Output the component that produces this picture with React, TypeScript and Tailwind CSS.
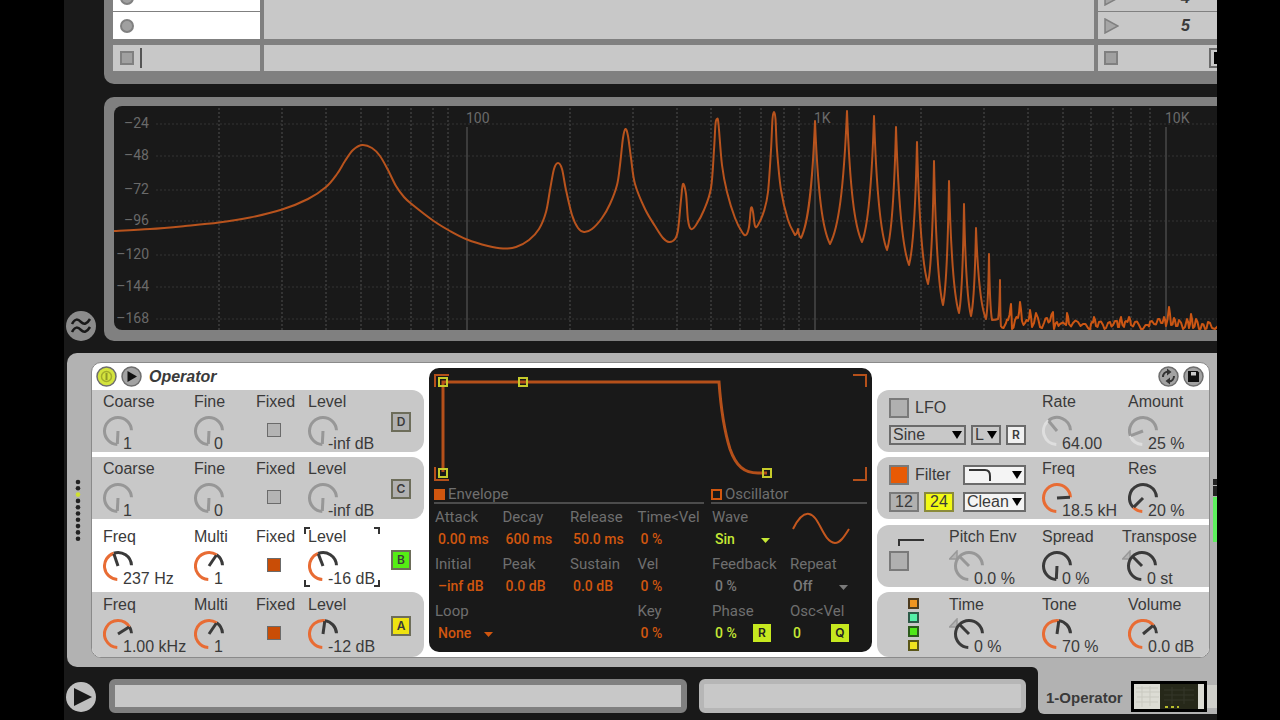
import React from 'react';
import clsx from 'clsx';

type Point = [number, number];

const DB_LINES = [
  { label: '–24', y: 124 },
  { label: '–48', y: 156 },
  { label: '–72', y: 190 },
  { label: '–96', y: 221 },
  { label: '–120', y: 255 },
  { label: '–144', y: 287 },
  { label: '–168', y: 319 },
];

const MINOR_LINES = [
  219, 282, 326, 361, 388, 411, 433, 448, 570, 633, 677, 711, 740, 761, 784, 799, 921, 984, 1028,
  1063, 1091, 1113, 1131, 1150,
];

const DECADES = [
  { label: '100', x: 467 },
  { label: '1K', x: 815 },
  { label: '10K', x: 1166 },
];

// low end of the spectrum, drawn as one smooth curve
const LOW_CURVE: Point[] = [
  [112, 231], [150, 229], [185, 226], [219, 222.5], [250, 217.5], [282, 209.5], [308, 199], [326, 187],
  [337, 174], [345, 161], [353, 150], [362, 145], [372, 148], [380, 156], [388, 170], [396, 186],
  [404, 197], [411, 203.5], [433, 220.5], [450, 231], [467, 239.5], [488, 246], [503, 248.5],
  [516, 247], [529, 240], [539, 229], [546, 212], [550, 190], [554, 169], [558, 163], [562, 169],
  [566, 190], [572, 215], [578, 228], [584, 232], [592, 229], [602, 218], [610, 204], [617, 185],
  [620, 165], [623, 138], [625.5, 129], [628, 136], [631, 158], [635, 184], [645, 209], [655, 226],
  [663, 238], [669, 242], [675, 239], [678, 230], [681, 200], [683, 184], [686, 194], [688, 220],
  [691, 229], [696, 225], [704, 210], [711, 188], [714, 150], [715.5, 124], [717, 119], [718.5, 124],
  [722, 165], [727, 192], [735, 218], [742, 232], [746, 235], [749, 227], [751, 208], [753, 212],
  [755, 226], [758, 225], [764, 211], [768, 192], [771, 150], [772.5, 119], [774, 112], [775.5, 119],
  [777, 150], [781, 190], [788, 220], [795, 235],
];

// valley / peak pairs of the upper partials
const PARTIALS: Point[] = [
  [798, 229], [801, 238], [815, 121], [830, 244], [847, 111], [862, 242], [874, 116], [887, 250],
  [896, 127], [909, 265], [917, 142], [928, 284], [934, 161], [943, 305], [949, 181], [959, 313],
  [964, 204], [971, 316], [976, 228], [986, 319], [989, 254], [992, 320], [998, 319], [1000, 280],
  [1001, 327],
];

const NOISE: Point[] = [
  [1001, 327], [1006, 323], [1008, 320], [1011, 304], [1012, 329], [1015, 320], [1018, 318],
  [1020, 302], [1022, 321], [1025, 323], [1028, 321], [1030, 310], [1032, 327], [1036, 313],
  [1040, 327], [1044, 323], [1047, 318], [1050, 321], [1053, 312], [1054, 329], [1057, 322],
  [1060, 324], [1066, 325], [1067, 313], [1069, 324], [1073, 323], [1078, 322], [1083, 324],
  [1088, 328], [1090, 330], [1092, 322], [1094, 317], [1096, 326], [1099, 322], [1103, 325],
  [1106, 328], [1110, 322], [1113, 325], [1117, 321], [1119, 327], [1121, 317], [1124, 327],
  [1126, 321], [1129, 317], [1131, 325], [1135, 322], [1139, 325], [1143, 329], [1148, 325],
  [1150, 322], [1154, 324], [1158, 319], [1161, 323], [1164, 317], [1166, 326], [1169, 307],
  [1171, 325], [1174, 318], [1176, 326], [1179, 320], [1183, 329], [1187, 319], [1189, 328],
  [1191, 314], [1193, 328], [1196, 319], [1199, 329], [1202, 324], [1205, 329], [1208, 322],
  [1212, 328], [1218, 326],
];

const smooth = (pts: Point[]) => {
  let d = `M${pts[0][0]} ${pts[0][1]}`;
  for (let i = 0; i < pts.length - 1; i++) {
    const p0 = pts[i - 1] || pts[i];
    const p1 = pts[i];
    const p2 = pts[i + 1];
    const p3 = pts[i + 2] || p2;
    d += ` C${p1[0] + (p2[0] - p0[0]) / 6} ${p1[1] + (p2[1] - p0[1]) / 6} ${p2[0] - (p3[0] - p1[0]) / 6} ${p2[1] - (p3[1] - p1[1]) / 6} ${p2[0]} ${p2[1]}`;
  }
  return d;
};

// flanks are flat near a valley and steep near a peak
const flanks = (start: Point, pts: Point[]) => {
  let [x, y] = start;
  let d = '';
  for (const [nx, ny] of pts) {
    const dx = nx - x;
    const dy = ny - y;
    d +=
      ny < y
        ? ` C${x + dx * 0.5} ${y + dy * 0.12} ${nx - dx * 0.2} ${y + dy * 0.4} ${nx} ${ny}`
        : ` C${x + dx * 0.2} ${ny - dy * 0.4} ${nx - dx * 0.5} ${ny - dy * 0.12} ${nx} ${ny}`;
    x = nx;
    y = ny;
  }
  return d;
};

const SPECTRUM = smooth(LOW_CURVE) + flanks(LOW_CURVE[LOW_CURVE.length - 1], PARTIALS);

// a small wiggle between the points makes the noise floor denser
const NOISE_FLOOR = NOISE.map(([x, y], i) => {
  if (i === 0) return `M${x} ${y}`;
  const [px, py] = NOISE[i - 1];
  const mid = Math.min(329, (py + y) / 2 + (i % 2 ? 3 : -2));
  return ` L${(px + x) / 2} ${mid} L${x} ${y}`;
}).join('');

const Spectrum: React.FC = () => (
  <svg viewBox="114 106 1103 224" className="block h-auto w-full rounded-l-[8px] bg-[#191919]">
    <g stroke="#343434" strokeWidth="2" strokeDasharray="2 2">
      {DB_LINES.map((l) => (
        <line key={l.y} x1="156" x2="1217" y1={l.y} y2={l.y} strokeWidth="1" />
      ))}
      {MINOR_LINES.map((x) => (
        <line key={x} x1={x} x2={x} y1="108" y2="330" />
      ))}
    </g>
    <g fill="#6a6a6a" fontFamily="Roboto, sans-serif" fontSize="14">
      {DECADES.map((d) => (
        <g key={d.label}>
          <line x1={d.x} x2={d.x} y1="127" y2="330" stroke="#3c3c3c" strokeWidth="2" />
          <text x={d.x - 1} y="123">{d.label}</text>
        </g>
      ))}
      {DB_LINES.map((l) => (
        <text key={l.y} x="149" y={l.y + 4} textAnchor="end">{l.label}</text>
      ))}
    </g>
    <g fill="none" strokeWidth="2" strokeLinejoin="round">
      <path d={SPECTRUM} stroke="#b8531d" />
      <path d={NOISE_FLOOR} stroke="#cb5614" />
    </g>
  </svg>
);

const polar = (cx: number, cy: number, r: number, value: number) => {
  const a = ((93 + 264 * value) * Math.PI) / 180;
  return [cx + r * Math.cos(a), cy + r * Math.sin(a)];
};

const arc = (cx: number, cy: number, r: number, from: number, to: number) => {
  const [x1, y1] = polar(cx, cy, r, from);
  const [x2, y2] = polar(cx, cy, r, to);
  return `M${x1} ${y1} A${r} ${r} 0 ${(to - from) * 264 > 180 ? 1 : 0} 1 ${x2} ${y2}`;
};

interface KnobProps {
  label: string;
  text: string;
  value: number;
  off?: boolean;
  bipolar?: boolean;
  selected?: boolean;
}

const Knob: React.FC<KnobProps> = ({ label, text, value, off, bipolar, selected }) => {
  const cx = bipolar ? 20 : 15;
  const base = off ? '#979797' : '#3a3a3a';
  const fill = off ? '#dedede' : '#e86c34';
  const filled = bipolar ? 0 : value;
  const [nx, ny] = polar(cx, 16, 13, value);
  return (
    <label className="relative block whitespace-nowrap">
      <span className="mb-[3px] block leading-5">{label}</span>
      <span className="flex h-[37px]">
        <svg className={clsx('h-8 shrink-0', bipolar ? 'w-[35px]' : 'w-[30px]')} fill="none">
          {bipolar && <path d="M0.5 9L8 1V9Z" stroke="#999" strokeWidth="1.5" fill="#b4b4b4" />}
          {filled < 1 && <path d={arc(cx, 16, 13.5, filled, 1)} stroke={base} strokeWidth="3" />}
          {filled > 0 && <path d={arc(cx, 16, 13.5, 0, filled)} stroke={fill} strokeWidth="3" />}
          <path d={`M${cx} 16 L${nx} ${ny}`} stroke={base} strokeWidth="3" />
        </svg>
        <span className="-ml-[10px] self-end leading-4">{text}</span>
      </span>
      <input type="range" min="0" max="1" step="0.01" defaultValue={value} className="sr-only" />
      {selected && (
        <svg className="absolute -left-[4px] top-0 h-[60px] w-[76px]" fill="none" stroke="#333" strokeWidth="2">
          <path d="M1 7V1H6M70 1H75V7M1 53V59H6M70 59H75V53" />
        </svg>
      )}
    </label>
  );
};

interface OscRowProps {
  name: string;
  knobs: KnobProps[];
  fixed: boolean;
  className: string;
  color: string;
}

const OscRow: React.FC<OscRowProps> = ({ name, knobs, fixed, className, color }) => (
  <div className={clsx('flex pl-[11px]', className)}>
    <div className="w-[91px]"><Knob {...knobs[0]} /></div>
    <div className="w-[62px]"><Knob {...knobs[1]} /></div>
    <label className="block w-[52px]">
      <span className="block leading-5">Fixed</span>
      <input
        type="checkbox"
        defaultChecked={fixed}
        className="mt-[11px] ml-[11px] block size-[14px] appearance-none border border-[#6b6b6b] bg-[#b4b4b4] checked:bg-[#c94d06]"
      />
    </label>
    <div className="w-[83px]"><Knob {...knobs[2]} /></div>
    <button
      className={clsx(
        'size-5 self-center border-2 border-[#6d6d5a] text-center font-[Inter,sans-serif] text-[12px] leading-4 font-semibold',
        color,
      )}
    >
      {name}
    </button>
  </div>
);

const Triangle: React.FC<{ className: string }> = ({ className }) => (
  <svg
    viewBox="0 0 10 8"
    preserveAspectRatio="none"
    className={clsx('pointer-events-none absolute', className)}
    fill="currentColor"
  >
    <path d="M0 0H10L5 8Z" />
  </svg>
);

interface DropProps {
  label: string;
  options: string[];
  className?: string;
  children?: React.ReactNode;
}

const Drop: React.FC<DropProps> = ({ label, options, className, children }) => (
  <span className={clsx('relative block h-5', className)}>
    <select
      aria-label={label}
      className="block h-5 w-full appearance-none border-2 border-[#6b6b6b] bg-transparent pl-[2px] leading-4 outline-none"
    >
      {options.map((o) => (
        <option key={o}>{o}</option>
      ))}
    </select>
    {children}
    <Triangle className="top-[6px] right-[4px] h-[8px] w-[10px] text-black" />
  </span>
);

const ToggleBox: React.FC<{ label: string; on?: boolean }> = ({ label, on }) => (
  <label className="flex h-5 items-center gap-[6px]">
    <input
      type="checkbox"
      defaultChecked={on}
      className="size-5 appearance-none border-2 border-[#7a7a7a] bg-[#b0b0b0] checked:bg-[#e85a05]"
    />
    {label}
  </label>
);

const EnvelopeGraph: React.FC = () => (
  <svg viewBox="434 373 433 108" className="block h-[108px] w-full" fill="none">
    <path
      d="M435 387V375H449M853 375H866V387M435 467V480H449M853 480H866V467"
      stroke="#b5501a"
      strokeWidth="2"
    />
    <path d="M443 472V382H719C721 410 724 430 730 449C736 466 744 473 758 473H767" stroke="#b5501a" strokeWidth="3" />
    {[[443, 382], [523, 382], [443, 473], [767, 473]].map(([x, y]) => (
      <rect key={`${x}-${y}`} x={x - 4} y={y - 4} width="8" height="8" stroke="#c6cb2b" strokeWidth="2" />
    ))}
  </svg>
);

interface CellProps {
  label: string;
  value?: string;
  select?: boolean;
  tone?: string;
  button?: string;
}

const Cell: React.FC<CellProps> = ({ label, value, select, tone = 'text-[#d0560f]', button }) => (
  <div className="h-11 pl-px whitespace-nowrap">
    <div className="text-[15px] leading-[22px]">{label}</div>
    {value && (
      <div className={clsx('flex h-[22px] items-center pl-[3px] text-[14px] leading-[22px] font-medium', tone)}>
        {select ? (
          <span className="relative block w-[56px]">
            <select aria-label={label} className="block h-[22px] w-full appearance-none bg-transparent leading-[22px] outline-none">
              <option>{value}</option>
            </select>
            <Triangle className="top-[10px] right-[1px] h-[5px] w-[9px]" />
          </span>
        ) : (
          <span className="w-[38px]">{value}</span>
        )}
        {button && (
          <button className="size-[18px] bg-[#c6e81f] text-center font-[Inter,sans-serif] text-[12px] leading-[18px] font-semibold text-[#222]">
            {button}
          </button>
        )}
      </div>
    )}
  </div>
);

const GREEN = 'text-[#c6e835]';

const Display: React.FC = () => (
  <div className="rounded-[10px] bg-[#191919] px-[5px] pt-[5px] pb-2 font-[Roboto,sans-serif] text-[#6f6f6f]">
    <EnvelopeGraph />
    <div className="mt-[5px] flex gap-[7px]">
      <div className="min-w-0 flex-1">
        <label className="flex h-[18px] items-center gap-[3px] border-b-2 border-[#4c4c4c] text-[15px] leading-4">
          <input type="radio" name="view" defaultChecked className="size-[11px] appearance-none border-2 border-[#d0560f] checked:bg-[#d0560f]" />
          Envelope
        </label>
        <div className="mt-[2px] grid grid-cols-4 gap-y-[3px]">
          <Cell label="Attack" value="0.00 ms" />
          <Cell label="Decay" value="600 ms" />
          <Cell label="Release" value="50.0 ms" />
          <Cell label="Time<Vel" value="0 %" />
          <Cell label="Initial" value="–inf dB" />
          <Cell label="Peak" value="0.0 dB" />
          <Cell label="Sustain" value="0.0 dB" />
          <Cell label="Vel" value="0 %" />
          <div className="col-span-3">
            <Cell label="Loop" value="None" select />
          </div>
          <Cell label="Key" value="0 %" />
        </div>
      </div>
      <div className="w-[156px]">
        <label className="flex h-[18px] items-center gap-[3px] border-b-2 border-[#4c4c4c] text-[15px] leading-4">
          <input type="radio" name="view" className="size-[11px] appearance-none border-2 border-[#d0560f] checked:bg-[#d0560f]" />
          Oscillator
        </label>
        <div className="mt-[2px] grid grid-cols-2 gap-y-[3px]">
          <Cell label="Wave" value="Sin" select tone={GREEN} />
          <svg viewBox="0 0 58 34" className="mt-[6px] ml-[3px] h-[34px] w-[58px]" fill="none" stroke="#c4571e" strokeWidth="2">
            <path d="M1 17C7 5 12 1 17 2C28 4 30 29 43 31C48 31 52 25 57 17" />
          </svg>
          <Cell label="Feedback" value="0 %" tone="text-[#7a7a7a]" />
          <Cell label="Repeat" value="Off" select tone="text-[#7a7a7a]" />
          <Cell label="Phase" value="0 %" tone={GREEN} button="R" />
          <Cell label="Osc<Vel" value="0" tone={GREEN} button="Q" />
        </div>
      </div>
    </div>
  </div>
);

const RoundIcon: React.FC<{ label: string; fill?: string; children: React.ReactNode }> = ({ label, fill = '#a3a3a3', children }) => (
  <button aria-label={label} className="block size-[21px] shrink-0">
    <svg viewBox="0 0 21 21" className="block size-[21px]">
      <circle cx="10.5" cy="10.5" r="9.5" fill={fill} stroke="#6e6e6e" strokeWidth="1.5" />
      {children}
    </svg>
  </button>
);

const OFF_KNOBS: KnobProps[] = [
  { label: 'Coarse', text: '1', value: 0, off: true },
  { label: 'Fine', text: '0', value: 0, off: true },
  { label: 'Level', text: '-inf dB', value: 0, off: true },
];

const SECTION = 'flex rounded-l-[12px] bg-[#c8c8c8] pl-3';

const Device: React.FC = () => (
  <div className="ml-[3px] flex rounded-l-[10px] bg-[#b2b2b2] py-[9px]">
    <div className="flex w-6 shrink-0 pl-2">
      <svg viewBox="0 0 6 62" className="mt-[117px] h-[62px] w-[6px]">
        {Array.from({ length: 10 }, (_, i) => (
          <circle key={i} cx="3" cy={3 + i * 6.3} r="2.3" fill={i === 2 ? '#cfe02f' : '#222'} />
        ))}
      </svg>
    </div>
    <div className="flex min-w-0 flex-1 overflow-hidden rounded-[10px] border border-[#8a8a8a] bg-white">
      <div className="flex w-[332px] shrink-0 flex-col">
        <div className="flex h-[27px] items-center gap-1 pl-1">
          <RoundIcon label="Device on" fill="#d3e33d">
            <circle cx="10.5" cy="10.5" r="5" fill="none" stroke="#a3ad2c" strokeWidth="1.5" />
            <path d="M10.5 7V14" stroke="#8f9926" strokeWidth="2" />
          </RoundIcon>
          <RoundIcon label="Unfold">
            <path d="M6.5 5L16 10.5L6.5 16Z" fill="#111" />
          </RoundIcon>
          <h1 className="ml-[3px] text-[16px] leading-5 font-bold italic">Operator</h1>
        </div>
        <OscRow name="D" className="mb-[5px] h-[62px] rounded-r-[12px] bg-[#c8c8c8] pt-[2px]" color="bg-[#b0b0b0]" fixed={false} knobs={OFF_KNOBS} />
        <OscRow name="C" className="h-[62px] rounded-r-[12px] bg-[#c8c8c8] pt-[2px]" color="bg-[#b0b0b0]" fixed={false} knobs={OFF_KNOBS} />
        <OscRow
          name="B"
          className="h-[73px] pt-2"
          color="bg-[#55ee14]"
          fixed
          knobs={[
            { label: 'Freq', text: '237 Hz', value: 0.6 },
            { label: 'Multi', text: '1', value: 0.8 },
            { label: 'Level', text: '-16 dB', value: 0.59, selected: true },
          ]}
        />
        <OscRow
          name="A"
          className="flex-1 rounded-r-[12px] bg-[#c8c8c8] pt-[3px]"
          color="bg-[#efe310]"
          fixed
          knobs={[
            { label: 'Freq', text: '1.00 kHz', value: 0.89 },
            { label: 'Multi', text: '1', value: 0.8 },
            { label: 'Level', text: '-12 dB', value: 0.7 },
          ]}
        />
      </div>
      <div className="min-w-0 flex-1 p-[5px]">
        <Display />
      </div>
      <div className="flex w-[332px] shrink-0 flex-col">
        <div className="flex h-[27px] items-center justify-end gap-1 pr-[5px]">
          <RoundIcon label="Hot-swap">
            <path d="M5 11A5.5 5.5 0 0 1 10 5.5M16 10A5.5 5.5 0 0 1 11 15.5" fill="none" stroke="#333" strokeWidth="2" />
            <path d="M9 2.5L13.5 6L9 9.5ZM12 11.5L7.5 15L12 18.5Z" fill="#333" />
          </RoundIcon>
          <RoundIcon label="Save preset">
            <path d="M5 5H14.5L16 6.5V16H5Z" fill="#111" />
            <path d="M8 6H13V9.5H8Z" fill="#ccc" />
          </RoundIcon>
        </div>
        <div className={clsx(SECTION, 'mb-[5px] h-[62px] pt-[2px]')}>
          <div className="flex w-[153px] flex-col gap-[7px] pt-[6px]">
            <ToggleBox label="LFO" />
            <div className="flex gap-[5px]">
              <Drop label="LFO wave" options={['Sine']} className="w-[77px]" />
              <Drop label="LFO range" options={['L']} className="w-[30px]" />
              <button className="size-5 border-2 border-[#6b6b6b] bg-[#f0f0f0] text-center font-[Inter,sans-serif] text-[12px] leading-4 font-semibold">R</button>
            </div>
          </div>
          <div className="w-[86px]"><Knob label="Rate" text="64.00" value={0.52} off /></div>
          <Knob label="Amount" text="25 %" value={0.25} off />
        </div>
        <div className={clsx(SECTION, 'mb-[6px] h-[62px] pt-[2px]')}>
          <div className="w-[153px] pt-[6px]">
            <div className="grid grid-cols-[74px_63px] gap-y-[7px]">
              <ToggleBox label="Filter" on />
              <Drop label="Filter type" options={['']} className="bg-[#f4f4f4]">
                <svg viewBox="0 0 24 14" className="pointer-events-none absolute top-[4px] left-[5px] h-[14px] w-6" fill="none" stroke="#333" strokeWidth="2">
                  <path d="M1 1H17Q22 1 22 7V12" />
                </svg>
              </Drop>
              <div className="flex gap-[5px]">
                <button className="h-5 w-[30px] border-2 border-[#7a7a7a] bg-[#b0b0b0] text-center leading-4">12</button>
                <button className="h-5 w-[30px] border-2 border-[#8a8a3a] bg-[#f2fa14] text-center leading-4">24</button>
              </div>
              <Drop label="Filter circuit" options={['Clean']} className="bg-[#f4f4f4]" />
            </div>
          </div>
          <div className="w-[86px]"><Knob label="Freq" text="18.5 kH" value={1} /></div>
          <Knob label="Res" text="20 %" value={0.16} />
        </div>
        <div className={clsx(SECTION, 'mb-[5px] h-[62px] pt-[2px]')}>
          <label className="w-[60px] pt-[10px]">
            <svg viewBox="0 0 26 10" className="ml-[9px] h-[10px] w-[26px]" fill="none" stroke="#333" strokeWidth="2">
              <path d="M1 9V3H26" />
            </svg>
            <input type="checkbox" aria-label="Pitch envelope" className="mt-[4px] block size-5 appearance-none border-2 border-[#7a7a7a] bg-[#b0b0b0]" />
          </label>
          <div className="w-[93px]"><Knob label="Pitch Env" text="0.0 %" value={0.5} off bipolar /></div>
          <div className="w-[80px]"><Knob label="Spread" text="0 %" value={0} /></div>
          <Knob label="Transpose" text="0 st" value={0.5} bipolar />
        </div>
        <div className={clsx(SECTION, 'flex-1 pt-[3px]')}>
          <div className="flex w-[60px] flex-col gap-[3px] pt-[3px] pl-[19px]">
            <span className="size-[11px] border-2 border-[#4c3a1e] bg-[#ee9420]" />
            <span className="size-[11px] border-2 border-[#2d5a48] bg-[#55f0a8]" />
            <span className="size-[11px] border-2 border-[#2c5a1c] bg-[#50e818]" />
            <span className="size-[11px] border-2 border-[#5a5618] bg-[#f0e420]" />
          </div>
          <div className="w-[93px]"><Knob label="Time" text="0 %" value={0.5} bipolar /></div>
          <div className="w-[86px]"><Knob label="Tone" text="70 %" value={0.7} /></div>
          <Knob label="Volume" text="0.0 dB" value={0.86} />
        </div>
      </div>
    </div>
    <div className="w-[7px] shrink-0 pt-[117px] pl-[3px]">
      <div className="mb-px h-[6px] bg-[#222]" />
      <div className="mb-px h-[10px] bg-[#222]" />
      <div className="h-[45px] bg-[#5cf05c]" />
    </div>
  </div>
);

const SlotRow: React.FC<{ scene: string; first?: boolean }> = ({ scene, first }) => (
  <div className={clsx('flex gap-1 overflow-hidden', first ? 'h-[11px] items-end' : 'h-7')}>
    <div className="flex h-7 w-[147px] shrink-0 items-center border-t border-[#808080] bg-white pl-[7px]">
      <span className="size-[14px] rounded-full border-2 border-[#808080] bg-[#a0a0a0]" />
    </div>
    <div className="h-7 flex-1 bg-[#c8c8c8]" />
    <div className="flex h-7 w-[119px] shrink-0 items-center overflow-hidden border-t border-[#808080] bg-[#c8c8c8] pl-[6px]">
      <svg viewBox="0 0 15 16" className="h-4 w-[15px] shrink-0">
        <path d="M1 1L14 8L1 15Z" fill="#a6a6a6" stroke="#808080" strokeWidth="1.5" />
      </svg>
      <span className="flex-1 pl-[62px] leading-5 font-bold italic">{scene}</span>
    </div>
  </div>
);

const Session: React.FC = () => (
  <div className="ml-10 rounded-bl-[10px] bg-[#808080] pb-[13px] pl-[9px]">
    <SlotRow scene="4" first />
    <SlotRow scene="5" />
    <div className="mt-[6px] flex h-[26px] gap-1">
      <div className="flex w-[147px] items-center gap-[6px] bg-[#c8c8c8] pl-[7px]">
        <button aria-label="Stop clip" className="size-[14px] border-2 border-[#808080] bg-[#a0a0a0]" />
        <span className="h-5 w-[2px] bg-[#555]" />
      </div>
      <div className="flex-1 bg-[#c8c8c8]" />
      <div className="flex w-[119px] items-center justify-between bg-[#c8c8c8] pl-[6px]">
        <button aria-label="Stop all clips" className="size-[14px] border-2 border-[#808080] bg-[#a0a0a0]" />
        <button aria-label="Back to arrangement" className="h-5 w-2 border-2 border-r-0 border-[#6b6b6b] py-[2px] pl-[3px]">
          <span className="block h-3 w-[3px] bg-black" />
        </button>
      </div>
    </div>
  </div>
);

const StatusBar: React.FC = () => (
  <div className="flex h-[53px] bg-[#b2b2b2]">
    <div className="flex flex-1 items-start gap-3 rounded-tr-[6px] bg-[#191919] pt-3 pr-3 pl-[2px]">
      <button aria-label="Preview" className="mt-[3px] block size-[30px]">
        <svg viewBox="0 0 30 30">
          <circle cx="15" cy="15" r="15" fill="#c0c0c0" />
          <path d="M8 6L26 15L8 24Z" fill="#191919" />
        </svg>
      </button>
      <div className="ml-px h-[34px] flex-1 rounded-[6px] border-[6px] border-[#808080] bg-[#c8c8c8]" />
      <div className="h-[34px] w-[327px] rounded-[6px] border-[5px] border-[#b6b6b6] bg-[#c8c8c8]" />
    </div>
    <div className="w-[179px] shrink-0 bg-[#191919] pb-[6px]">
      <div className="flex h-full items-center rounded-bl-[6px] bg-[#b2b2b2] pl-2">
        <span className="w-[85px] pt-[14px] text-[15px] leading-5 font-bold">1-Operator</span>
        <span className="mt-[11px] flex h-[31px] w-[76px] border-[3px] border-black bg-[#dcdcd4]">
          <svg viewBox="0 0 70 25" className="h-[25px] w-[70px]">
            <path d="M2 4H24M2 8H26M3 13H25M2 18H24M8 2V23M16 2V22" stroke="#c9c9c0" strokeWidth="1" />
            <rect x="26" width="38" height="25" fill="#262819" />
            <path d="M30 6H60M30 11H60M30 16H60M38 3V20M50 3V20" stroke="#34372a" strokeWidth="1" />
            <path d="M31 23H34M37 23H40M43 23H45" stroke="#b9be2c" strokeWidth="2" />
          </svg>
        </span>
        <span className="mt-[11px] h-[23px] flex-1 bg-[#cfcfca]" />
      </div>
    </div>
  </div>
);

const App: React.FC = () => (
  <div className="min-h-screen overflow-hidden bg-black pr-[63px] pl-16">
    <div className="relative min-h-screen bg-[#191919] font-['Liberation_Sans',Arial,sans-serif] text-[16px] text-[#3a3a3a]">
      <Session />
      <div className="mt-[13px] mb-3 flex items-end">
        <div className="w-10 shrink-0 pl-[2px]">
          <button aria-label="Groove pool" className="block size-[30px]">
            <svg viewBox="0 0 30 30">
              <circle cx="15" cy="15" r="15" fill="#8c8c8c" />
              <path d="M6 13C9 7 12 8 15 11C18 14 21 13 24 8M6 21C9 15 12 16 15 19C18 22 21 21 24 16" fill="none" stroke="#191919" strokeWidth="2.5" />
            </svg>
          </button>
        </div>
        <div className="min-w-0 flex-1 rounded-l-[10px] bg-[#808080] pt-[9px] pb-[11px] pl-[10px]">
          <Spectrum />
        </div>
      </div>
      <Device />
      <StatusBar />
    </div>
  </div>
);

export default App;
